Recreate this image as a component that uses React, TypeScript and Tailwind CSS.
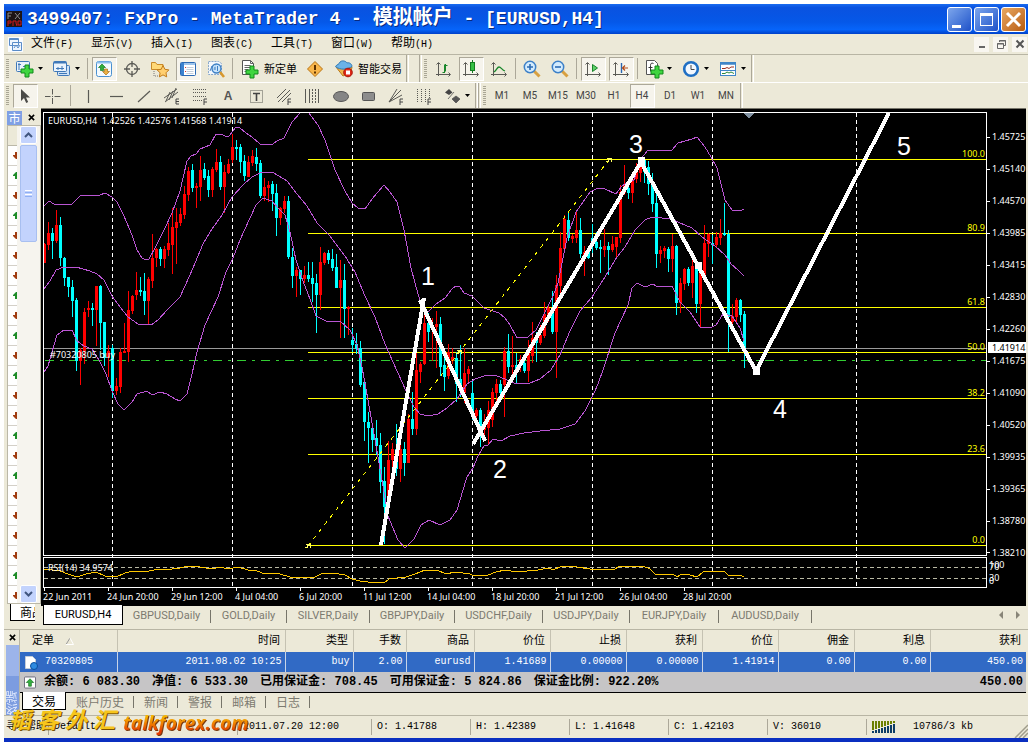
import React from "react";
import type { ReactNode } from "react";

/* ---------- market data: [high, bodyTop, bodyBottom, low], bull = red, bear = cyan ---------- */
type Candle = ["R" | "C", number, number, number, number];

const FIRST_X = 44;
const STEP = 4;

const candles: Candle[] = [
  ["R", 243, 244, 263, 263], ["R", 222, 233, 245, 250], ["C", 228, 233, 241, 259], ["R", 210, 225, 241, 243],
  ["C", 217, 225, 258, 266], ["C", 257, 258, 278, 286], ["C", 277, 277, 287, 297], ["C", 280, 287, 301, 317],
  ["C", 298, 300, 361, 371], ["R", 348, 350, 361, 385], ["R", 308, 312, 351, 364], ["R", 301, 308, 310, 317],
  ["C", 303, 308, 310, 326], ["R", 286, 286, 310, 346], ["C", 285, 286, 323, 350], ["C", 322, 322, 358, 366],
  ["R", 345, 351, 357, 377], ["C", 345, 348, 391, 398], ["R", 378, 386, 391, 395], ["R", 348, 352, 387, 393],
  ["R", 323, 351, 353, 353], ["R", 291, 310, 352, 362], ["R", 295, 296, 311, 314], ["R", 272, 290, 295, 300],
  ["C", 277, 290, 292, 296], ["C", 273, 291, 301, 315], ["R", 277, 279, 301, 324], ["R", 234, 258, 281, 288],
  ["R", 248, 249, 258, 267], ["C", 247, 249, 259, 266], ["R", 246, 249, 259, 268], ["R", 223, 243, 250, 256],
  ["R", 208, 227, 245, 274], ["R", 208, 222, 228, 264], ["R", 208, 214, 223, 226], ["R", 186, 194, 215, 219],
  ["R", 167, 171, 195, 201], ["C", 164, 170, 188, 192], ["R", 183, 186, 188, 208], ["R", 156, 170, 187, 201],
  ["C", 163, 169, 178, 180], ["C", 170, 176, 190, 197], ["R", 167, 169, 190, 197], ["R", 149, 162, 170, 172],
  ["C", 156, 162, 187, 190], ["R", 165, 172, 187, 213], ["R", 159, 164, 173, 174], ["R", 134, 147, 160, 163],
  ["C", 140, 147, 149, 160], ["C", 144, 147, 162, 173], ["C", 155, 161, 176, 181], ["R", 156, 162, 177, 177],
  ["R", 150, 156, 163, 166], ["C", 148, 157, 164, 171], ["C", 160, 163, 196, 198], ["R", 178, 187, 196, 201],
  ["R", 181, 185, 188, 202], ["C", 181, 184, 194, 211], ["C", 184, 193, 218, 236], ["R", 207, 208, 218, 225],
  ["R", 196, 201, 209, 213], ["C", 196, 201, 257, 259], ["C", 248, 257, 276, 288], ["R", 267, 270, 276, 297],
  ["C", 270, 270, 279, 295], ["R", 266, 275, 279, 283], ["C", 262, 275, 279, 282], ["C", 262, 278, 284, 302],
  ["C", 274, 283, 295, 333], ["R", 247, 262, 295, 310], ["R", 252, 253, 263, 265], ["C", 250, 253, 260, 264],
  ["C", 249, 259, 268, 271], ["C", 254, 267, 288, 288], ["R", 260, 280, 288, 338], ["C", 264, 280, 309, 338],
  ["R", 306, 307, 309, 335], ["C", 328, 340, 345, 352], ["C", 333, 344, 349, 354], ["C", 341, 348, 385, 387],
  ["C", 378, 382, 422, 441], ["C", 412, 422, 428, 463], ["C", 427, 428, 440, 452], ["C", 420, 438, 446, 455],
  ["C", 433, 445, 482, 493], ["C", 467, 481, 507, 544], ["R", 441, 460, 507, 510], ["R", 443, 449, 460, 473],
  ["C", 424, 449, 469, 476], ["R", 442, 449, 469, 482], ["C", 442, 449, 463, 476], ["R", 414, 419, 463, 463],
  ["C", 392, 419, 429, 435], ["R", 352, 370, 429, 435], ["R", 362, 364, 372, 383], ["R", 307, 323, 364, 365],
  ["C", 313, 323, 332, 342], ["R", 318, 325, 328, 361], ["R", 311, 324, 327, 368], ["C", 317, 324, 367, 376],
  ["C", 355, 365, 377, 391], ["R", 344, 352, 376, 379], ["R", 348, 357, 361, 364], ["C", 352, 358, 384, 402],
  ["C", 345, 379, 390, 397], ["R", 348, 373, 393, 403], ["R", 366, 369, 374, 383], ["C", 380, 393, 413, 420],
  ["R", 408, 410, 416, 420], ["C", 408, 410, 432, 447], ["R", 414, 426, 430, 440], ["R", 401, 410, 428, 445],
  ["R", 388, 392, 420, 427], ["R", 379, 384, 393, 405], ["C", 380, 384, 393, 397], ["R", 347, 351, 385, 417],
  ["C", 334, 351, 367, 373], ["R", 336, 365, 367, 382], ["C", 353, 365, 370, 384], ["R", 355, 359, 366, 372],
  ["C", 360, 363, 371, 373], ["R", 340, 353, 371, 382], ["R", 322, 338, 356, 363], ["C", 332, 337, 343, 362],
  ["R", 325, 335, 343, 345], ["R", 302, 314, 336, 338], ["R", 306, 308, 317, 322], ["C", 291, 308, 332, 334],
  ["R", 275, 285, 332, 378], ["R", 232, 248, 286, 298], ["R", 215, 219, 249, 252], ["C", 212, 220, 238, 241],
  ["R", 234, 236, 239, 243], ["R", 212, 230, 238, 243], ["C", 218, 230, 254, 258], ["R", 246, 252, 255, 276],
  ["C", 247, 251, 258, 259], ["C", 224, 238, 242, 253], ["C", 232, 242, 248, 250], ["C", 240, 247, 249, 273],
  ["R", 229, 246, 250, 257], ["C", 242, 246, 250, 275], ["R", 236, 244, 250, 252], ["R", 237, 237, 247, 258],
  ["R", 185, 192, 238, 243], ["R", 165, 185, 193, 195], ["C", 185, 188, 193, 199], ["R", 177, 179, 193, 203],
  ["R", 163, 167, 179, 183], ["R", 157, 160, 173, 182], ["C", 157, 160, 172, 183], ["C", 161, 167, 184, 195],
  ["C", 173, 183, 204, 212], ["C", 190, 203, 254, 268], ["R", 246, 250, 254, 263], ["R", 246, 248, 251, 258],
  ["C", 247, 249, 259, 272], ["R", 234, 246, 259, 272], ["C", 245, 246, 303, 315], ["R", 278, 283, 303, 313],
  ["R", 268, 269, 284, 290], ["C", 267, 269, 283, 286], ["R", 259, 266, 283, 298], ["C", 262, 265, 304, 313],
  ["R", 265, 273, 304, 328], ["R", 225, 243, 275, 275], ["R", 233, 234, 244, 257], ["C", 235, 243, 245, 264],
  ["R", 232, 237, 245, 247], ["R", 219, 233, 238, 245], ["C", 203, 233, 235, 236], ["C", 230, 234, 317, 352],
  ["R", 304, 316, 322, 325], ["R", 298, 300, 317, 322], ["C", 299, 300, 315, 322], ["C", 311, 314, 348, 368],
];

const bands = [
  "44,206 49,201 54,204 72,204 80,196 84,195 100,195 105,193 112,197 117,202 124,216 132,235 137,250 142,258 146,260 149,259 155,248 165,228 172,213 180,191 187,161 191,156 196,154 200,149 210,145 216,134 221,134 225,136 229,136 233,131 236,127 240,128 246,133 252,137 260,144 273,144 277,141 284,138 292,122 300,113",
  "309,113 318,125 325,140 335,170 345,191 352,203 358,208 365,209 372,199 384,185 390,192 397,202 404,230 411,268 418,294 423,311 427,313 436,304 445,298 452,289 456,286 460,287 464,293 472,296 484,308 499,313 505,318 510,325 517,338 528,337 536,330 545,312 553,296 558,283 567,238 576,212 590,192 598,188 605,189 616,194 622,186 630,181 634,180 640,160 648,150 672,150 678,143 692,139 697,137 705,147 711,157 717,168 725,200 732,210 740,211 744,209",
  "44,289 50,281 56,270 64,267 76,267 90,271 97,274 104,280 112,296 120,307 128,317 138,324 151,325 158,320 168,309 180,297 190,275 203,244 212,229 222,215 232,197 244,184 252,177 262,172 274,173 287,181 297,194 307,206 317,223 330,236 345,256 355,272 365,296 375,317 385,344 393,362 402,382 407,393 414,407 420,414 428,416 438,414 447,408 457,399 467,384 475,379 487,375 497,376 505,379 514,383 530,383 540,379 551,370 560,355 570,331 580,311 592,297 605,277 617,257 625,247 635,230 645,220 652,217 672,219 680,223 692,228 702,237 715,246 725,255 731,264 738,270 744,276",
  "44,372 48,366 52,352 57,335 64,330 72,330 77,341 84,346 92,349 99,360 106,374 112,391 118,404 124,410 132,402 137,394 147,391 152,395 160,392 167,394 175,399 180,401 187,394 192,374 197,352 205,325 218,297 226,272 233,258 240,240 250,218 256,205 263,198 272,201 278,208 285,215 290,232 296,260 303,281 310,299 316,316 328,322 340,321 350,330 357,345 362,367 368,400 375,440 382,480 388,516 398,540 405,548 414,539 421,525 429,520 440,525 450,520 457,510 463,490 467,477 473,468 478,456 484,446 488,445 493,439 501,441 510,436 524,433 540,431 560,429 575,424 585,411 594,393 598,384 604,367 615,333 628,305 632,288 637,283 645,287 653,284 657,287 672,286 680,302 690,312 700,327 710,328 716,325 723,314 732,316 740,328 744,341",
];

const rsi =
  "44,569 60,571 68,574 77,577 86,574 96,572 105,576 116,577 125,573 133,571 145,572 158,569 172,569 180,568 188,566 200,567 212,569 220,567 228,569 238,567 248,570 255,570 262,573 280,574 290,577 315,577 323,573 333,573 345,575 352,579 360,581 368,582 384,583 389,579 397,578 406,577 415,574 425,570 437,570 446,574 455,572 470,574 474,576 488,575 496,572 505,570 517,572 538,570 549,568 553,570 562,566 577,567 590,569 615,569 620,566 643,566 650,569 656,575 673,574 677,577 682,574 690,575 697,577 703,572 708,571 714,572 724,571 729,576 740,575 744,577";

const dayLines = [112, 232, 352, 472, 592, 712, 856];

const fib: [number, string][] = [
  [159, "100.0"], [233, "80.9"], [307, "61.8"], [352, "50.0"], [398, "38.2"], [454, "23.6"], [545, "0.0"],
];

const prices = [
  "1.45725", "1.45140", "1.44570", "1.43985", "1.43415", "1.42830", "1.42260",
  "1.41675", "1.41090", "1.40520", "1.39935", "1.39365", "1.38780", "1.38210",
];

const times = [
  "22 Jun 2011", "24 Jun 20:00", "29 Jun 12:00", "4 Jul 04:00", "6 Jul 20:00", "11 Jul 12:00",
  "14 Jul 04:00", "18 Jul 20:00", "21 Jul 12:00", "26 Jul 04:00", "28 Jul 20:00",
];

const waves: [number, number, string][] = [
  [428, 285, "1"], [500, 478, "2"], [636, 153, "3"], [780, 418, "4"], [904, 155, "5"],
];

function Chart() {
  return (
    <svg
      viewBox="41 109 985 496"
      className="block h-[496px] w-full bg-black font-['Noto_Sans',sans-serif] text-[9px]"
      shapeRendering="crispEdges"
      role="img"
      aria-label="EURUSD,H4"
    >
      {dayLines.map((x) => (
        <path key={x} d={`M${x + 0.5} 113V587`} stroke="#fff" strokeDasharray="4 3" />
      ))}
      <path d="M44 348.5H986" stroke="#9a9a9a" />
      <path d="M44 567.5H986M44 578.5H986" stroke="#b9b9a4" strokeDasharray="4 3" />
      {fib.map(([y]) => (
        <path key={y} d={`M308 ${y + 0.5}H986`} stroke="#ffff00" />
      ))}
      <path d="M45 360.5H986" stroke="#32cd32" strokeDasharray="9 6 3 6" />
      {candles.map(([c, h, t, b, l], i) => {
        const x = FIRST_X + STEP * i;
        const fill = c === "R" ? "#ff0000" : "#00ffff";
        return (
          <g key={x} fill={fill}>
            <rect x={x} y={h} width={1} height={Math.max(1, l - h)} />
            <rect x={i ? x - 1 : x} y={t} width={i ? 3 : 2} height={Math.max(1, b - t)} />
          </g>
        );
      })}
      {bands.map((p) => (
        <polyline key={p.slice(0, 8)} points={p} fill="none" stroke="#ba55d3" />
      ))}
      <polyline points={rsi} fill="none" stroke="#ffc800" />
      <path d="M308 546L609 160" stroke="#ffff00" strokeDasharray="4 5" fill="none" />
      <path d="M306 544h4v1h-3v2h-2M310 546v2M457 350h4v1h-3v2h-2M461 352v2M607 158h4v1h-3v2h-2M611 160v2" stroke="#ffff60" fill="none" />

      <g fill="none" stroke="#fff" strokeWidth={4}>
        <path d="M381 545L424 298" />
        <path d="M420 300L485 441" />
        <path d="M473 444L641 162L756 371L889 113" />
      </g>
      <path d="M638 157h7v7h-7zM695 262h7v7h-7zM753 368h7v7h-7z" fill="#fff" />
      <path d="M743 113h11l-5 5h-1z" fill="#8090a0" />

      <rect x={986} y={109} width={40} height={496} fill="#000" />
      <rect x={41} y={109} width={985} height={3} fill="#000" />
      <path d="M43.5 555.5V112.5H986.5V555.5ZM43.5 587.5V557.5H986.5V587.5Z" fill="none" stroke="#fff" />

      <g fill="#fff">
        <text x={48} y={124} className="whitespace-pre">{"EURUSD,H4  1.42526 1.42576 1.41568 1.41914"}</text>
        <text x={50} y={358}>#70320805 buy</text>
        <text x={48} y={571}>RSI(14) 34.9574</text>
        {prices.map((p, k) => (
          <g key={p}>
            <rect x={987} y={137 + 32 * k - (k === 13 ? 1 : 0)} width={3} height={1} />
            <text x={992} y={140 + 32 * k}>{p}</text>
          </g>
        ))}
        {times.map((t, k) => (
          <g key={t}>
            <rect x={44 + 64 * k} y={588} width={1} height={3} />
            <text x={43 + 64 * k} y={600}>{t}</text>
          </g>
        ))}
        <text x={989} y={568}>100</text>
        <text x={989} y={570}>70</text>
        <text x={989} y={581}>30</text>
        <text x={989} y={584}>0</text>
      </g>
      <g fill="#ffff00" textAnchor="end">
        {fib.map(([y, t]) => (
          <text key={t} x={985} y={y - 2}>{t}</text>
        ))}
      </g>
      <rect x={988} y={342} width={38} height={11} fill="#fff" />
      <text x={992} y={351} fill="#000">1.41914</text>
      <g fill="#fff" textAnchor="middle" className="font-['Liberation_Sans',sans-serif] text-[25px]">
        {waves.map(([x, y, t]) => (
          <text key={t} x={x} y={y}>{t}</text>
        ))}
      </g>
    </svg>
  );
}

/* ---------- icons ---------- */
function Ico({ children }: { children: ReactNode }) {
  return (
    <svg viewBox="0 0 20 20" width={20} height={20} className="shrink-0" fill="none" aria-hidden="true">
      {children}
    </svg>
  );
}

const Plus = ({ x, y }: { x: number; y: number }) => (
  <path d={`M${x} ${y}h4v4h4v4h-4v4h-4v-4h-4v-4h4z`} fill="#3fd53f" stroke="#138a1c" />
);
const G = "#5a5a55";
const F = ({ x = 14, y = 14, t = "F" }: { x?: number; y?: number; t?: string }) => (
  <path
    d={t === "F" ? `M${x + 4} ${y - 1}h-3v6M${x + 1} ${y + 2}h3` : `M${x + 4} ${y - 1}h-3v5h3M${x + 1} ${y + 1.5}h3`}
    stroke="#444"
  />
);

const icons: Record<string, ReactNode> = {
  newChart: (
    <Ico>
      <rect x="1.5" y="2.5" width="13" height="10" rx="1" fill="#eaf3fc" stroke="#3f78b8" />
      <path d="M4 4v7M3 5.5h3M8 7.5h4" stroke="#3f78b8" />
      <Plus x={10} y={6} />
    </Ico>
  ),
  profiles: (
    <Ico>
      <rect x="5.5" y="6.5" width="12" height="10" rx="1" fill="#cfe2f6" stroke="#3f78b8" />
      <rect x="1.5" y="2.5" width="13" height="10" rx="1" fill="#eaf3fc" stroke="#3f78b8" />
      <path d="M2 3.5h12" stroke="#3f78b8" strokeWidth="2" />
      <path d="M4 9.5h8M6 8v3M10 7v4M7 14.5h8" stroke="#3f78b8" />
    </Ico>
  ),
  market: (
    <Ico>
      <rect x="2.5" y="2.5" width="15" height="15" rx="2" fill="#f4faff" stroke="#4a90d0" />
      <path d="M3 3.5h14" stroke="#8cc0ee" strokeWidth="2" />
      <path d="M8 5l3.5 3.5h-2v3h-3v-3h-2z" fill="#2fae3a" stroke="#187a22" strokeWidth=".7" />
      <path d="M12 16l3.5-3.5h-2v-2.5h-3v2.5h-2z" fill="#eab040" stroke="#a8701c" strokeWidth=".7" />
    </Ico>
  ),
  target: (
    <Ico>
      <circle cx="10" cy="10" r="5.5" stroke={G} strokeWidth="1.3" />
      <path d="M10 2v6M10 12v6M2 10h6M12 10h6" stroke={G} strokeWidth="1.3" />
    </Ico>
  ),
  favorite: (
    <Ico>
      <path d="M1.5 3.5h4l1.5 2h6v5h-11.5z" fill="#ffd978" stroke="#c98a28" />
      <path d="M4 12v5h6" stroke="#777" strokeDasharray="1 1" />
      <path d="M13 6.5l1.900 3.800 4 .6-2.900 2.900.7 4.100-3.700-2-3.600 2 .7-4.100-3-2.900 4.100-.6z" fill="#ffcf70" stroke="#c27c1c" />
    </Ico>
  ),
  panel: (
    <Ico>
      <rect x="2.5" y="3.5" width="15" height="13" rx="1" fill="#fff" stroke="#2c6ab4" />
      <path d="M3 4h3v12h-3z" fill="#3b82cf" />
      <path d="M6 5h11" stroke="#9cc4ec" strokeWidth="2" />
      <path d="M8.5 8.5h7M8.5 10.5h7M8.5 12.5h7M8.5 14.5h7" stroke="#c3cfdc" />
      <path d="M7 8.5h1M7 12.5h1" stroke="#d33" />
    </Ico>
  ),
  tester: (
    <Ico>
      <path d="M2.5 2.5h10l3 2v11h-13z" fill="#f3f8fd" stroke="#88a8cc" strokeDasharray="2 1" />
      <path d="M4 12l2-5 2 4 2-6" stroke="#4e86c4" />
      <circle cx="10.5" cy="9.5" r="4.5" fill="#bfe0fa" fillOpacity=".8" stroke="#3c7fc4" strokeWidth="1.4" />
      <path d="M9 11V8M11.5 12V7" stroke="#3c7fc4" />
      <path d="M14 13l4 5" stroke="#d8982c" strokeWidth="2.6" />
    </Ico>
  ),
  order: (
    <Ico>
      <path d="M2.5 1.5h8l3 3v11h-11z" fill="#fff" stroke="#555" />
      <path d="M10.5 1.5v3h3M4.5 6.5h6M4.5 8.5h6M4.5 10.5h4M4.5 12.5h3" stroke="#666" />
      <Plus x={10} y={7} />
    </Ico>
  ),
  alert: (
    <Ico>
      <path d="M10 2.5L17.5 10 10 17.5 2.5 10z" fill="#f8b64c" stroke="#b97412" strokeLinejoin="round" />
      <path d="M10 6v5M10 12.5v2" stroke="#5d3200" strokeWidth="2" />
    </Ico>
  ),
  expert: (
    <Ico>
      <path d="M2 8l7 9 8-4 1-5z" fill="#f0b44c" stroke="#b97a1c" />
      <path d="M1.5 7.5C3 5 5 6 6 3c2-2 6-1 7 1 2-1 5 1 5 3.5-4 3-12 4-16.5 0z" fill="#6bb3e8" stroke="#2f78b4" />
      <circle cx="14" cy="13.5" r="4.3" fill="#e02818" stroke="#a81408" />
      <rect x="12" y="11.500" width="4" height="4" fill="#fff" />
    </Ico>
  ),
  bars: (
    <Ico>
      <path d="M5.5 4v13M3 15.5h14M3.5 5.5l2-2 2 2M15.5 13.5l2 2-2 2" stroke={G} />
      <path d="M9.5 13.5h2v-7h3M12.5 12.5V5M11.5 5.5V14" stroke="#19862a" />
    </Ico>
  ),
  candles: (
    <Ico>
      <path d="M4.5 4v13M2 15.5h15M2.5 5.5l2-2 2 2M15.5 13.5l2 2-2 2" stroke={G} />
      <path d="M11.5 1v13" stroke="#147a20" />
      <rect x="9.5" y="3.5" width="4" height="8" fill="#35c043" stroke="#147a20" />
    </Ico>
  ),
  line: (
    <Ico>
      <path d="M4.5 4v13M2 15.5h15M2.5 5.5l2-2 2 2M15.5 13.5l2 2-2 2" stroke={G} />
      <path d="M5 13c3-2 3-5 5-5s3 3 6 4" stroke="#19862a" strokeWidth="1.3" />
    </Ico>
  ),
  zoomIn: (
    <Ico>
      <path d="M12 12l5.5 5.5" stroke="#d8a040" strokeWidth="3" />
      <circle cx="8" cy="8" r="5.7" fill="#d3ebfd" stroke="#3c80c8" strokeWidth="1.5" />
      <path d="M8 5v6M5 8h6" stroke="#2c6cb4" strokeWidth="1.6" />
    </Ico>
  ),
  zoomOut: (
    <Ico>
      <path d="M12 12l5.5 5.5" stroke="#d8a040" strokeWidth="3" />
      <circle cx="8" cy="8" r="5.7" fill="#d3ebfd" stroke="#3c80c8" strokeWidth="1.5" />
      <path d="M5 8h6" stroke="#2c6cb4" strokeWidth="1.6" />
    </Ico>
  ),
  autoScroll: (
    <Ico>
      <path d="M4.5 4v13M2 15.5h15M2.5 5.5l2-2 2 2M15.5 13.5l2 2-2 2" stroke={G} />
      <path d="M9.5 5.5l5 3.5-5 3.5z" fill="#5fd06a" stroke="#19862a" />
    </Ico>
  ),
  shift: (
    <Ico>
      <path d="M4.5 4v13M2 15.5h15M2.5 5.5l2-2 2 2M15.5 13.5l2 2-2 2" stroke={G} />
      <path d="M10.5 4v10" stroke="#2a66b0" strokeWidth="1.4" />
      <path d="M17 9h-5M14 6.5L11.5 9l2.5 2.5" stroke="#b04a18" strokeWidth="1.2" />
    </Ico>
  ),
  indicators: (
    <Ico>
      <path d="M2.5 1.5h8l3 3v11h-11z" fill="#fff" stroke="#555" />
      <path d="M9.5 4.5c-2-1-3 0-3 2v6M4.5 8.5h4" stroke="#333" />
      <Plus x={11} y={7} />
    </Ico>
  ),
  clock: (
    <Ico>
      <circle cx="10" cy="10" r="6.8" fill="#f2f8ff" stroke="#1f6fc4" strokeWidth="2.6" />
      <path d="M10 6v4.5h3.5" stroke="#444" />
    </Ico>
  ),
  template: (
    <Ico>
      <rect x="2.5" y="3.5" width="15" height="13" fill="#fff" stroke="#3f86c8" />
      <path d="M3 4.5h14" stroke="#3f86c8" strokeWidth="2.5" />
      <path d="M4 9.5h3l2-1 2 1 2-1.5h3" stroke="#9c3020" />
      <path d="M3 11.5h14" stroke="#3f86c8" />
      <path d="M4 14.5h3l2-1.5 2 1 2-1 3 1.5" stroke="#2c8a3c" />
    </Ico>
  ),
  cursor: (
    <Ico>
      <path d="M6 3v12l3-3 2.2 5 2-1-2.2-4.5h4z" fill="#4b4b48" />
    </Ico>
  ),
  cross: (
    <Ico>
      <path d="M9.5 3v5.5M9.500 12v6M2 10.5h5.5M11.500 10.5h6" stroke={G} />
      <path d="M9 10.5h1" stroke={G} />
    </Ico>
  ),
  vline: <Ico><path d="M10.5 4v13" stroke={G} strokeWidth="1.2" /></Ico>,
  hline: <Ico><path d="M4 10.5h13" stroke={G} strokeWidth="1.2" /></Ico>,
  trend: <Ico><path d="M4 16L16 5" stroke={G} strokeWidth="1.2" /></Ico>,
  channel: (
    <Ico>
      <path d="M2 12L15 3M3 16L16 6M4 15l4-9M7 14l4-9M10 12l4-10" stroke={G} />
      <F x={13} y={14} t="E" />
    </Ico>
  ),
  fib: (
    <Ico>
      <path d="M3 3.5h14M3 6.5h14M3 10.5h14M3 14.5h9" stroke={G} strokeDasharray="1 1" />
      <F x={13} y={14} />
    </Ico>
  ),
  label: (
    <Ico>
      <rect x="4.5" y="4.5" width="12" height="12" stroke={G} strokeDasharray="1 1" />
      <path d="M7 7.5h7M10.500 7.5V15" stroke="#444" strokeWidth="1.6" />
    </Ico>
  ),
  pitch: (
    <Ico>
      <path d="M3 12L12 3M4 16L16 4M8 16L17 7" stroke={G} />
      <F x={13} y={14} />
    </Ico>
  ),
  cycle: (
    <Ico>
      <path d="M3.5 3v14M7.5 3v14M16.5 3v14" stroke={G} />
      <path d="M10.5 3v14M13.5 3v14" stroke={G} strokeDasharray="2 1" />
    </Ico>
  ),
  ellipse: <Ico><ellipse cx="11" cy="10.5" rx="7.5" ry="5" fill="#858585" stroke="#555" /></Ico>,
  rect: <Ico><rect x="4.5" y="6.5" width="12" height="8" rx="1" fill="#8d8d8d" stroke="#555" /></Ico>,
  fan: (
    <Ico>
      <path d="M3 16L11 3M3 16L15 4M3 16L16 9" stroke={G} />
      <F x={13} y={14} />
    </Ico>
  ),
  timezones: (
    <Ico>
      <path d="M3.5 3v14M7.5 3v14M11.5 3v14M15.5 3v9" stroke={G} strokeDasharray="1 1" />
      <F x={13} y={14} />
    </Ico>
  ),
  arrows: (
    <Ico>
      <path d="M7 3l3.5 3.5L7 9 3 6.5z" fill="#444" />
      <path d="M6 13l6-7M14 10l4 3-4 4-4-4z" fill="#555" stroke="#555" strokeWidth=".8" />
    </Ico>
  ),
};

/* ---------- small building blocks ---------- */
const MONO = "font-['Liberation_Mono','Noto_Sans_CJK_SC',monospace]";

const Caret = () => (
  <svg viewBox="0 0 5 3" width={5} height={3} className="shrink-0" aria-hidden="true">
    <path d="M0 0h5L2.5 3z" fill="#000" />
  </svg>
);

const Grip = () => (
  <span className="mx-[2px] h-[20px] w-[3px] shrink-0 bg-[repeating-linear-gradient(to_bottom,#a9a695_0_1px,transparent_1px_2px)]" />
);

const Sep = ({ wide = false }: { wide?: boolean }) => (
  <span className={`h-[21px] w-px shrink-0 bg-[#aca899] ${wide ? "mx-[3px]" : "mx-[2px]"}`} />
);

const Break = () => <span className="w-[3px] shrink-0 self-stretch border-x border-l-[#aca899] border-r-white" />;

function Tool({ label, pressed = false, children }: { label: string; pressed?: boolean; children: ReactNode }) {
  return (
    <button type="button" aria-label={label} className="flex w-7 shrink-0 items-center justify-center">
      <span
        className={
          pressed
            ? "flex h-6 w-[25px] items-center justify-center border border-t-[#aca899] border-r-white border-b-white border-l-[#aca899] bg-[#f6f4ec]"
            : "flex h-6 w-[25px] items-center justify-center"
        }
      >
        {children}
      </span>
    </button>
  );
}

function DropTool({ label, children }: { label: string; children: ReactNode }) {
  return (
    <button type="button" aria-label={label} className="flex w-[37px] shrink-0 items-center gap-[3px] pl-1">
      {children}
      <Caret />
    </button>
  );
}

function TextTool({ icon, children }: { icon: ReactNode; children: ReactNode }) {
  return (
    <button type="button" className="flex shrink-0 items-center gap-1 pr-1 pl-[5px] text-[11px] leading-4 whitespace-nowrap">
      {icon}
      <span className="pb-[2px]">{children}</span>
    </button>
  );
}

/* ---------- sections ---------- */
function TitleBar() {
  return (
    <header className="flex h-[30px] items-center bg-[linear-gradient(to_bottom,#1a6cf0_0,#0a52e0_12%,#0558e8_60%,#0664fa_85%,#0040c8_100%)] px-[2px] text-white">
      <svg viewBox="0 0 16 16" width={16} height={16} className="shrink-0" aria-hidden="true">
        <rect width="16" height="16" fill="#1c1414" />
        <path d="M2 8V2h4M2 5h3M9 2l5 6M14 2L9 8" stroke="#8c8c8c" fill="none" />
        <path d="M2 15v-5h3v2H2M7 15v-5h3v2l1 3M12 10h3v4h-3z" stroke="#d01818" fill="none" />
      </svg>
      <h1 className={`min-w-0 flex-1 truncate pl-[5px] text-[18px] leading-[28px] font-bold whitespace-pre [text-shadow:1px_1px_0_#082a80] ${MONO}`}>
        3499407: FxPro - MetaTrader 4 - <span className="text-[20px]">模拟帐户</span> - [EURUSD,H4]
      </h1>
      <div className="flex shrink-0 gap-[2px]">
        <button type="button" aria-label="最小化" className="h-[25px] w-[25px] rounded-[3px] border border-white bg-linear-to-br from-[#7ea6ec] to-[#1e50c8]">
          <svg viewBox="0 0 23 23" className="h-full w-full" aria-hidden="true"><path d="M4 17h9v3H4z" fill="#fff" /></svg>
        </button>
        <button type="button" aria-label="最大化" className="h-[25px] w-[25px] rounded-[3px] border border-white bg-linear-to-br from-[#7ea6ec] to-[#1e50c8]">
          <svg viewBox="0 0 23 23" className="h-full w-full" aria-hidden="true"><path d="M5 5h13v13H5zM6 8h11v9H6z" fill="#fff" fillRule="evenodd" /></svg>
        </button>
        <button type="button" aria-label="关闭" className="h-[25px] w-[25px] rounded-[3px] border border-white bg-linear-to-br from-[#e8a860] to-[#b85c08]">
          <svg viewBox="0 0 23 23" className="h-full w-full" aria-hidden="true"><path d="M5 5l13 13M18 5L5 18" stroke="#fff" strokeWidth="3" /></svg>
        </button>
      </div>
    </header>
  );
}

const menus = [["文件", "F"], ["显示", "V"], ["插入", "I"], ["图表", "C"], ["工具", "T"], ["窗口", "W"], ["帮助", "H"]];

function MenuBar() {
  const mdi = "flex h-[15px] w-[15px] items-center justify-center bg-[#f8f6f0]";
  return (
    <nav className="flex h-[21px] items-center border-b border-[#b8b5a4] pr-[1px] pl-1">
      <svg viewBox="0 0 15 15" width={15} height={15} className="shrink-0 bg-[#f8fbff]" aria-hidden="true">
        <path d="M1.5 1.5h9v7h-9zM4.5 5.5h9v8h-9z" fill="#eef5fd" stroke="#5a8cc8" />
        <path d="M2 2.5h8M6 11l2-3 2 3 2-3" stroke="#5a8cc8" fill="none" />
      </svg>
      <div className={`flex flex-1 pl-2 ${MONO}`}>
        {menus.map(([m, k]) => (
          <button key={k} type="button" className="w-[60px] text-left text-[10px] leading-5 whitespace-nowrap">
            <span className="text-[12px]">{m}</span>({k})
          </button>
        ))}
      </div>
      <div className="flex gap-[4px]">
        <button type="button" aria-label="最小化图表" className={mdi}>
          <svg viewBox="0 0 10 10" width={10} height={10}><path d="M2 7h6v2H2z" fill="#666" /></svg>
        </button>
        <button type="button" aria-label="还原图表" className={mdi}>
          <svg viewBox="0 0 10 10" width={10} height={10} fill="none" stroke="#666"><path d="M3.5 3V1.5h6v5H8M3 2h7M1.5 4.5h6v5h-6zM1 5h7" /></svg>
        </button>
        <button type="button" aria-label="关闭图表" className={mdi}>
          <svg viewBox="0 0 10 10" width={10} height={10} fill="none" stroke="#555" strokeWidth="2"><path d="M1.5 1.5l7 7M8.5 1.5l-7 7" /></svg>
        </button>
      </div>
    </nav>
  );
}

function MainToolbar() {
  return (
    <div className="flex h-7 items-stretch border-b border-white bg-[#ece9d8]">
      <div className="flex items-center">
        <Grip />
        <DropTool label="新图表">{icons.newChart}</DropTool>
        <DropTool label="配置文件">{icons.profiles}</DropTool>
        <Sep />
        <Tool label="市场报价" pressed>{icons.market}</Tool>
        <Tool label="数据窗口">{icons.target}</Tool>
        <Tool label="导航">{icons.favorite}</Tool>
        <Tool label="终端" pressed>{icons.panel}</Tool>
        <Tool label="策略测试">{icons.tester}</Tool>
        <Sep />
        <TextTool icon={icons.order}>新定单</TextTool>
        <Tool label="MetaEditor">{icons.alert}</Tool>
        <TextTool icon={icons.expert}>智能交易</TextTool>
        <Break />
        <span className="w-[10px]" />
        <Break />
        <Grip />
        <Tool label="柱状图">{icons.bars}</Tool>
        <Tool label="阴阳烛" pressed>{icons.candles}</Tool>
        <Tool label="折线图">{icons.line}</Tool>
        <Sep />
        <Tool label="放大">{icons.zoomIn}</Tool>
        <Tool label="缩小">{icons.zoomOut}</Tool>
        <Sep />
        <Tool label="自动滚动" pressed>{icons.autoScroll}</Tool>
        <Tool label="图表平移" pressed>{icons.shift}</Tool>
        <Sep />
        <DropTool label="指标">{icons.indicators}</DropTool>
        <DropTool label="时段">{icons.clock}</DropTool>
        <DropTool label="模板">{icons.template}</DropTool>
        <Break />
      </div>
    </div>
  );
}

const frames = ["M1", "M5", "M15", "M30", "H1", "H4", "D1", "W1", "MN"];

function DrawToolbar() {
  return (
    <div className="flex h-[25px] items-center">
      <Grip />
      <Tool label="光标" pressed>{icons.cursor}</Tool>
      <Tool label="十字线">{icons.cross}</Tool>
      <Sep wide />
      <Tool label="垂直线">{icons.vline}</Tool>
      <Tool label="水平线">{icons.hline}</Tool>
      <Tool label="趋势线">{icons.trend}</Tool>
      <Tool label="等距通道">{icons.channel}</Tool>
      <Tool label="斐波那契回调">{icons.fib}</Tool>
      <Tool label="文字"><span className="font-['Liberation_Sans',sans-serif] text-[12px] font-bold text-[#555]">A</span></Tool>
      <Tool label="文字标签">{icons.label}</Tool>
      <Tool label="斐波那契通道">{icons.pitch}</Tool>
      <Tool label="周期线">{icons.cycle}</Tool>
      <Tool label="椭圆">{icons.ellipse}</Tool>
      <Tool label="矩形">{icons.rect}</Tool>
      <Tool label="斐波那契扇形">{icons.fan}</Tool>
      <Tool label="斐波那契时区">{icons.timezones}</Tool>
      <DropTool label="箭头">{icons.arrows}</DropTool>
      <Break />
      <Break />
      <Grip />
      {frames.map((f) => (
        <Tool key={f} label={f} pressed={f === "H4"}>
          <span className="font-['Roboto',sans-serif] text-[10px] text-[#444]">{f}</span>
        </Tool>
      ))}
      <Break />
    </div>
  );
}

const quotes = [0, 1, 0, 1, 0, 0, 0, 1, 0, 1, 0, 1, 0, 0, 1, 0, 1, 0, 0, 0, 0, 1, 0];

function MarketWatch() {
  const btn = "flex h-[18px] w-[17px] shrink-0 items-center justify-center rounded-[2px] border border-white bg-[#c3d3fd]";
  return (
    <aside className="flex w-[37px] shrink-0 flex-col pt-[2px] pl-[3px]">
      <div className="flex h-[15px] items-center justify-between pr-[6px]">
        <span className="h-[14px] w-[15px] bg-[#7f9fe4] text-center text-[12px] leading-[14px] text-white">市</span>
        <button type="button" aria-label="关闭市场报价">
          <svg viewBox="0 0 8 8" width={7} height={7}><path d="M1 1l6 6M7 1L1 7" stroke="#000" strokeWidth="1.8" /></svg>
        </button>
      </div>
      <div className="flex h-[479px] border border-[#bbb8a8] bg-white">
        <div className="w-[9px] overflow-hidden">
          <div className="h-[20px] border-b border-[#bbb8a8] bg-[#ece9d8]" />
          {quotes.map((up, i) => (
            <div key={i} className="flex h-5 items-center justify-end border-b border-[#d4d0c8]">
              <svg viewBox="0 0 4 7" width={4} height={7} fill={up ? "#1e8c28" : "#a03c10"}>
                <path d={up ? "M0 3L3 0h1v7H2V4H0z" : "M0 4L3 7h1V0H2v3H0z"} />
              </svg>
            </div>
          ))}
        </div>
        <div className="flex flex-1 flex-col items-center bg-[#f6f4ee]">
          <button type="button" aria-label="向上滚动" className={btn}>
            <svg viewBox="0 0 9 6" width={9} height={6} fill="none"><path d="M1 5l3.5-3.5L8 5" stroke="#40557f" strokeWidth="2" /></svg>
          </button>
          <div className="mt-px flex h-[97px] w-[17px] flex-col items-center justify-center gap-px rounded-[2px] border border-[#a8bff0] bg-[#c3d3fd]">
            <span className="h-px w-[7px] bg-white" />
            <span className="h-px w-[7px] bg-[#8fb0f4]" />
            <span className="h-px w-[7px] bg-white" />
            <span className="h-px w-[7px] bg-[#8fb0f4]" />
          </div>
          <div className="flex-1" />
          <button type="button" aria-label="向下滚动" className={btn}>
            <svg viewBox="0 0 9 6" width={9} height={6} fill="none"><path d="M1 1l3.5 3.5L8 1" stroke="#40557f" strokeWidth="2" /></svg>
          </button>
        </div>
      </div>
      <div className="ml-[3px] h-[17px] w-[25px] overflow-hidden border-b border-l border-black bg-white pl-[9px] text-[12px] leading-[15px] whitespace-nowrap">
        商品
      </div>
    </aside>
  );
}

const chartTabs: [string, string][] = [
  ["GBPUSD,Daily", "w-[88px]"], ["GOLD,Daily", "w-[76px]"], ["SILVER,Daily", "w-[83px]"], ["GBPJPY,Daily", "w-[85px]"],
  ["USDCHF,Daily", "w-[88px]"], ["USDJPY,Daily", "w-[87px]"], ["EURJPY,Daily", "w-[89px]"], ["AUDUSD,Daily", "w-[93px]"],
];

function ChartTabs() {
  return (
    <div className="flex h-[21px] items-start border-t border-black pl-[2px] font-['Roboto',sans-serif] text-[11px] leading-[18px] text-[#7c7a70]">
      <button type="button" className="-mt-px h-[20px] w-[80px] border-x border-b border-black bg-white pt-px text-black">
        EURUSD,H4
      </button>
      {chartTabs.map(([t, w]) => (
        <button key={t} type="button" className={`flex h-[20px] shrink-0 items-center justify-center whitespace-nowrap ${w}`}>
          <span className="flex-1 text-center">{t}</span>
          <span className="h-[13px] w-px bg-[#77756a]" />
        </button>
      ))}
      <span className="flex-1" />
      <span className="flex h-[18px] items-center gap-[13px] pr-[6px]">
        <button type="button" aria-label="上一个"><svg viewBox="0 0 4 8" width={4} height={8}><path d="M4 0v8L0 4z" fill="#888578" /></svg></button>
        <button type="button" aria-label="下一个"><svg viewBox="0 0 4 8" width={4} height={8}><path d="M0 0v8l4-4z" fill="#888578" /></svg></button>
      </span>
    </div>
  );
}

const columns: [string, string, string][] = [
  ["时间", "w-[168px]", "2011.08.02 10:25"], ["类型", "w-[68px]", "buy"], ["手数", "w-[53px]", "2.00"],
  ["商品", "w-[68px]", "eurusd"], ["价位", "w-[76px]", "1.41689"], ["止损", "w-[76px]", "0.00000"],
  ["获利", "w-[76px]", "0.00000"], ["价位", "w-[76px]", "1.41914"], ["佣金", "w-[76px]", "0.00"],
  ["利息", "w-[76px]", "0.00"], ["获利", "", "450.00"],
];

const balance: [string, string][] = [
  ["余额", "6 083.30"], ["净值", "6 533.30"], ["已用保证金", "708.45"], ["可用保证金", "5 824.86"], ["保证金比例", "922.20%"],
];

function Terminal() {
  return (
    <section className="mt-[3px] flex h-[86px] border-t border-[#b8b5a4]">
      <div className="flex w-[15px] shrink-0 flex-col items-center pl-px">
        <button type="button" aria-label="关闭终端" className="flex h-[15px] items-center">
          <svg viewBox="0 0 8 8" width={7} height={7}><path d="M1 1l6 6M7 1L1 7" stroke="#000" strokeWidth="1.8" /></svg>
        </button>
        <span className="flex w-[13px] flex-1 items-end justify-center bg-linear-to-b from-[#9cb4ea] from-45% to-[#7c9ce0] to-45% text-[12px] leading-[12px] text-[#e4ecff]">
          <span className="rotate-180 [writing-mode:vertical-rl]">终端</span>
        </span>
      </div>
      <div className="min-w-0 flex-1 border-l border-[#b8b5a4] pr-[2px]">
        <table className={`w-full table-fixed border-collapse text-[10px] leading-[18px] ${MONO}`}>
          <thead>
            <tr className="h-[22px] text-[11px]">
              <th className="w-[97px] py-0 pl-3 text-left font-normal">
                <span className="flex items-center gap-3">
                  定单
                  <svg viewBox="0 0 8 8" width={8} height={8} fill="none"><path d="M0 7.5L4 1" stroke="#999" /><path d="M4 1l3.5 6.5H0" stroke="#fff" /></svg>
                </span>
              </th>
              {columns.map(([h, w], i) => (
                <th key={i} className={`p-0 pr-[5px] text-right font-normal shadow-[inset_1px_0_0_#c5c2b2] ${w}`}>{h}</th>
              ))}
            </tr>
          </thead>
          <tbody>
            <tr className="h-5 bg-[#316ac5] text-white">
              <td className="p-0">
                <span className="flex items-center gap-[7px] pl-1">
                  <svg viewBox="0 0 14 15" width={14} height={15} aria-hidden="true">
                    <path d="M1.5 1.5h7l3 3v9h-10z" fill="#fff" stroke="#c4ccd8" />
                    <circle cx="10" cy="11" r="3.5" fill="#2e8ae0" stroke="#0a4fa0" />
                  </svg>
                  70320805
                </span>
              </td>
              {columns.map(([, , v], i) => (
                <td key={i} className="border-l border-[#c8d4e8] p-0 pr-[3px] text-right">{v}</td>
              ))}
            </tr>
            <tr className="h-5 bg-[#c6c5c6] text-[12px] font-bold">
              <td colSpan={11} className="p-0">
                <span className="flex items-center gap-3 pl-1 whitespace-nowrap">
                  <svg viewBox="0 0 13 13" width={12} height={13} className="-mr-1 shrink-0" aria-hidden="true">
                    <rect x=".5" y=".5" width="12" height="12" rx="1" fill="#fff" stroke="#667" />
                    <path d="M6.5 2.5l4 4h-2.5v4h-3v-4h-2.5z" fill="#35b040" stroke="#147020" strokeWidth=".7" />
                  </svg>
                  {balance.map(([k, v]) => (
                    <span key={k}>{k}: {v}</span>
                  ))}
                </span>
              </td>
              <td className="p-0 pr-[3px] text-right">450.00</td>
            </tr>
          </tbody>
        </table>
        <div className="flex border-t border-black pl-[2px] text-[12px] leading-[17px] text-[#7c7a70]">
          <button type="button" className="-mt-px h-[18px] w-[44px] border-x border-b border-black bg-white text-black">交易</button>
          {["账户历史", "新闻", "警报", "邮箱", "日志"].map((t) => (
            <button key={t} type="button" className="flex items-center gap-[9px] pl-[10px]">
              {t}
              <span className="h-3 w-px bg-[#77756a]" />
            </button>
          ))}
        </div>
      </div>
    </section>
  );
}

const ohlc = ["O: 1.41788", "H: 1.42389", "L: 1.41648", "C: 1.42103", "V: 36010"];

function StatusBar() {
  const cell = "h-4 border-l border-[#aca899] pl-[5px] whitespace-nowrap";
  return (
    <footer className={`relative flex h-[23px] items-center border-t border-[#b8b5a4] text-[10px] leading-4 ${MONO}`}>
      <span className="w-[44px] pl-[2px] text-[10px] whitespace-nowrap">寻求帮助</span>
      <span className={`w-[189px] ${cell}`}>Default</span>
      <span className={`w-[134px] ${cell}`}>2011.07.20 12:00</span>
      {ohlc.map((v) => (
        <span key={v} className={`w-[99px] ${cell}`}>{v}</span>
      ))}
      <span className={`flex items-center gap-[18px] ${cell}`}>
        <svg viewBox="0 0 23 12" width={23} height={12} aria-hidden="true">
          {[0, 1, 2, 3, 4, 5, 6, 7].map((i) => (
            <g key={i}>
              <rect x={i * 3} y={0} width={2} height={9 - i} fill="#6b8000" />
              <rect x={i * 3} y={10 - i} width={2} height={2 + i} fill="#0c3c66" />
            </g>
          ))}
        </svg>
        10786/3 kb
      </span>
      <span className="flex-1" />
      <svg viewBox="0 0 14 14" width={14} height={14} className="self-end" aria-hidden="true">
        <path d="M1 14L14 1M5 14l9-9M9 14l5-5" stroke="#a09d8c" strokeWidth="1.5" />
      </svg>
      <div className="absolute -top-[6px] left-[5px] flex items-center leading-[26px] font-bold italic">
        <span className="flex gap-[6px] text-[22px] text-[#f6c51c] [text-shadow:1px_1px_0_#7a5200]">
          <span>韬</span><span>客</span><span>外</span><span>汇</span>
        </span>
        <span className="bg-linear-to-b from-[#f5b400] from-25% to-[#e23a00] to-80% bg-clip-text pl-2 font-['Open_Sans',sans-serif] text-[19px] text-transparent drop-shadow-[1px_1px_0_#7a3a10]">
          talkforex.com
        </span>
      </div>
    </footer>
  );
}

export default function App() {
  return (
    <div className="min-h-screen bg-white px-1 pt-1 font-['Noto_Sans_CJK_SC',sans-serif] text-black">
      <div className="flex min-w-[1000px] flex-col bg-[#ece9d8]">
        <TitleBar />
        <MenuBar />
        <MainToolbar />
        <DrawToolbar />
        <main className="flex pr-[2px]">
          <MarketWatch />
          <div className="min-w-0 flex-1 border-t border-[#77756a]">
            <Chart />
            <ChartTabs />
          </div>
        </main>
        <Terminal />
        <StatusBar />
        <div className="h-1 bg-[#0a2fc0]" />
      </div>
    </div>
  );
}
